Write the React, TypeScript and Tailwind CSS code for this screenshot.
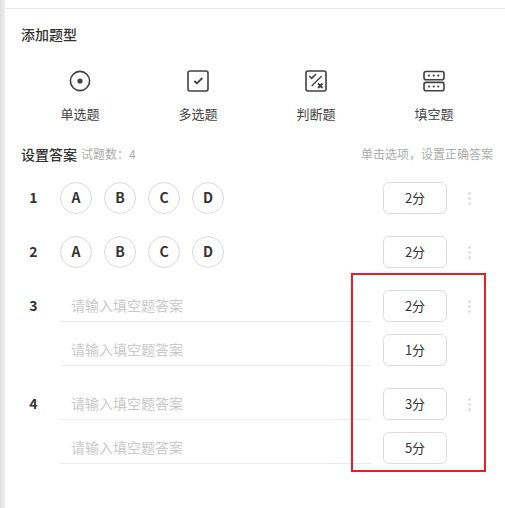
const font = { fontFamily: '"Noto Sans CJK SC", "Liberation Sans", sans-serif' }

function RadioIcon() {
  return (
    <svg width="22" height="22" viewBox="0 0 22 22" fill="none" stroke="#404040" strokeWidth="1.6">
      <circle cx="11" cy="11" r="9.6" />
      <circle cx="11" cy="11" r="2.6" fill="#404040" stroke="none" />
    </svg>
  )
}

function CheckIcon() {
  return (
    <svg width="22" height="22" viewBox="0 0 22 22" fill="none" stroke="#404040" strokeWidth="1.6">
      <rect x="1" y="1" width="20" height="20" rx="2" />
      <path d="M7.300 11l2.700 2.300 5.300-5.300" strokeWidth="1.8" />
    </svg>
  )
}

function JudgeIcon() {
  return (
    <svg width="22" height="22" viewBox="0 0 22 22" fill="none" stroke="#404040" strokeWidth="1.6">
      <rect x="1" y="1" width="20" height="20" rx="2" />
      <path d="M4.300 6l2.400 2.300 4.300-4.300" strokeWidth="1.6" />
      <path d="M6.700 16l10-10" strokeWidth="1.3" />
      <path d="M13 13.500l4.500 4.500M17.500 13.500l-4.500 4.500" strokeWidth="1.8" />
    </svg>
  )
}

function BlankIcon() {
  return (
    <svg width="22" height="22" viewBox="0 0 22 22" fill="none" stroke="#404040" strokeWidth="1.6">
      <rect x="1" y="1.500" width="20" height="8.300" rx="2" />
      <rect x="1" y="12.400" width="20" height="8.300" rx="2" />
      <g fill="#404040" stroke="none">
        <circle cx="6" cy="5.600" r="1.100" />
        <circle cx="10.700" cy="5.600" r="1.100" />
        <circle cx="15.300" cy="5.600" r="1.100" />
        <circle cx="6" cy="16.500" r="1.100" />
        <circle cx="10.700" cy="16.500" r="1.100" />
        <circle cx="15.300" cy="16.500" r="1.100" />
      </g>
    </svg>
  )
}

function Dots() {
  return (
    <div className="flex w-[5px] flex-col items-center gap-[2px]">
      <span className="h-[3px] w-[3px] rounded-full bg-[#dcdfe5]" />
      <span className="h-[3px] w-[3px] rounded-full bg-[#dcdfe5]" />
      <span className="h-[3px] w-[3px] rounded-full bg-[#dcdfe5]" />
    </div>
  )
}

function Score({ value }: { value: number }) {
  return (
    <div className="flex h-8 w-16 shrink-0 items-center justify-center rounded-md border border-[#dcdcdc] pb-[1px] text-[13px] text-[#333]">
      {value}分
    </div>
  )
}

function RowNo({ no }: { no?: number }) {
  return <div className="w-[39px] pr-[14px] pb-[2px] text-center text-[14px] font-semibold text-[#333]">{no}</div>
}

function ChoiceRow({ no }: { no: number }) {
  return (
    <div className="flex h-8 items-center">
      <RowNo no={no} />
      <div className="flex flex-1 gap-3">
        {["A", "B", "C", "D"].map((o) => (
          <div
            key={o}
            className="flex h-8 w-8 items-center justify-center rounded-full border border-[#d5d9e2] pb-[1px] text-[14px] font-semibold text-[#333]"
          >
            {o}
          </div>
        ))}
      </div>
      <Score value={2} />
      <div className="ml-5 mr-[33px]">
        <Dots />
      </div>
    </div>
  )
}

function BlankRow({ no, score }: { no?: number; score: number }) {
  return (
    <div className="flex h-8 items-center">
      <RowNo no={no} />
      <div className="flex h-8 w-[311px] items-center border-b border-[#ebebeb] pl-[11px] text-[14px] text-[#c8c8c8]">
        请输入填空题答案
      </div>
      <div className="ml-3">
        <Score value={score} />
      </div>
      <div className="ml-5 mr-[33px]">{no ? <Dots /> : <div className="w-[5px]" />}</div>
    </div>
  )
}

export default function App() {
  const types = [
    { label: "单选题", icon: <RadioIcon /> },
    { label: "多选题", icon: <CheckIcon /> },
    { label: "判断题", icon: <JudgeIcon /> },
    { label: "填空题", icon: <BlankIcon /> },
  ]

  return (
    <div className="relative h-[508px] w-[505px] overflow-hidden bg-white" style={font}>
      <div className="flex h-full">
        <div className="w-[5px] shrink-0 bg-gradient-to-r from-[#dedede] to-[#efefef]" />
        <div className="flex-1">
          <div className="h-[9px] border-b border-[#e8e8e8]" />
          <div className="pl-[16px]">
            <h2 className="mt-[15px] text-[14px] leading-[20px] font-medium text-[#333]">添加题型</h2>
            <div className="mt-[26px] grid w-[472px] grid-cols-4">
              {types.map((t) => (
                <div key={t.label} className="flex flex-col items-center">
                  {t.icon}
                  <span className="mt-[12px] text-[13px] leading-[20px] text-[#444]">{t.label}</span>
                </div>
              ))}
            </div>
            <div className="mt-[20px] flex w-[472px] items-center justify-between">
              <div className="flex items-center gap-[4px]">
                <span className="text-[14px] leading-[20px] font-medium text-[#333]">设置答案</span>
                <span className="text-[12px] leading-[20px] text-[#aaa]">试题数：4</span>
              </div>
              <span className="text-[12px] leading-[20px] text-[#aaa]">单击选项，设置正确答案</span>
            </div>
          </div>
          <div className="mt-[18px] flex flex-col pl-[16px]">
            <ChoiceRow no={1} />
            <div className="h-[22px]" />
            <ChoiceRow no={2} />
            <div className="h-[22px]" />
            <BlankRow no={3} score={2} />
            <div className="h-3" />
            <BlankRow score={1} />
            <div className="h-[22px]" />
            <BlankRow no={4} score={3} />
            <div className="h-3" />
            <BlankRow score={5} />
          </div>
        </div>
      </div>
      <div className="absolute left-[351px] top-[273px] h-[199px] w-[135px] border-2 border-[#ed1c24]" />
    </div>
  )
}
